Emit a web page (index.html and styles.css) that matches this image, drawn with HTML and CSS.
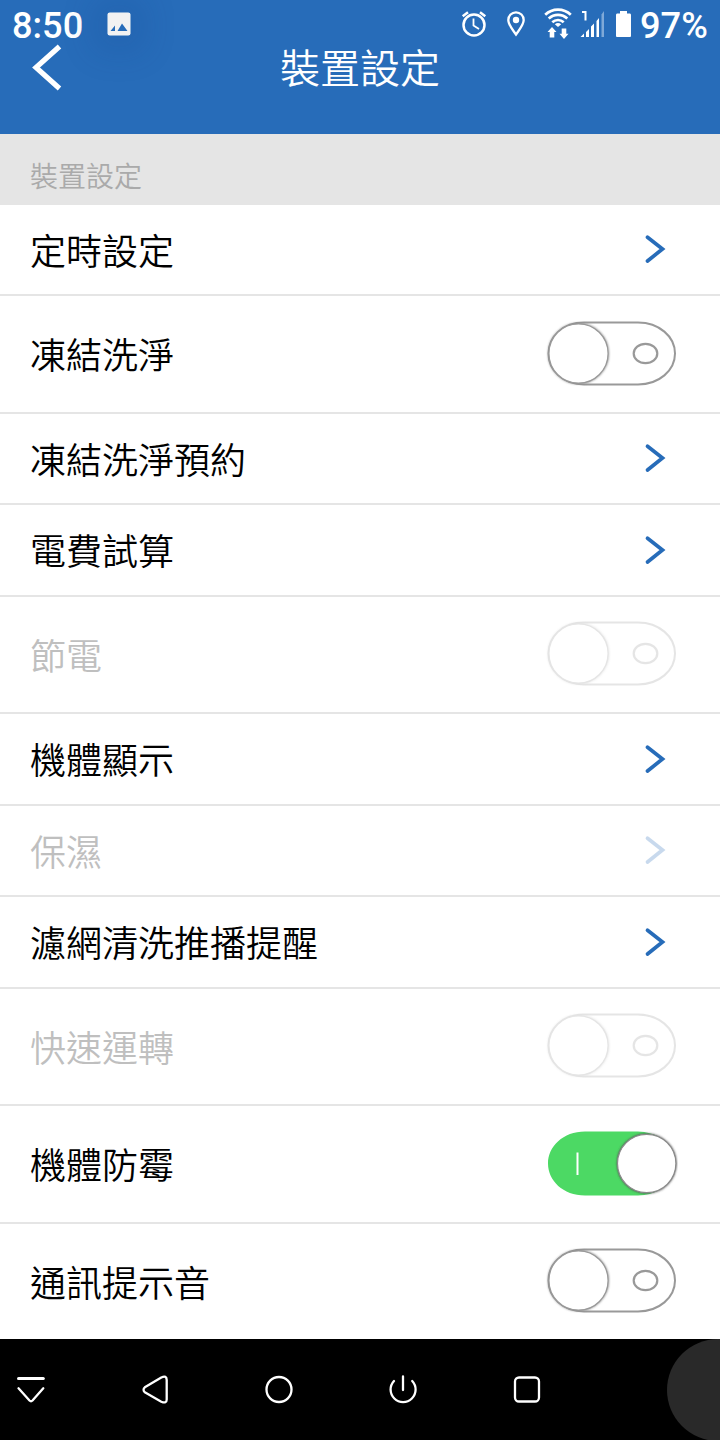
FILE: index.html
```html
<!DOCTYPE html>
<html lang="zh-Hant">
<head>
<meta charset="utf-8">
<title>裝置設定</title>
<link rel="stylesheet" href="styles.css">
</head>
<body>
<svg class="defs" width="0" height="0">
  <defs>
    <filter id="soft" x="-20%" y="-20%" width="140%" height="140%"><feGaussianBlur stdDeviation="1.2"/></filter>
    <symbol id="chevron" viewBox="0 0 22 30"><path d="M3.500 3.200 18.500 15 3.500 27" fill="none" stroke="currentColor" stroke-width="3.700" stroke-linecap="round"/></symbol>
    <symbol id="toggle-off" viewBox="0 0 132 68">
      <path d="M38 2.500H92C113 2.500 129 16.500 129 33.500S113 64.500 92 64.500H38C17 64.500 2.500 50.500 2.500 33.500S17 2.500 38 2.500Z" fill="#fff" stroke="#999" stroke-width="2"/>
      <circle cx="32.500" cy="33.500" r="29.600" fill="none" stroke="#888" stroke-width="1.800" filter="url(#soft)"/>
      <circle cx="32.500" cy="33.500" r="29.600" fill="#fff" stroke="#999" stroke-width="1.300"/>
      <ellipse cx="99.500" cy="33.500" rx="11.800" ry="9.600" fill="none" stroke="#999" stroke-width="2.200"/>
    </symbol>
    <symbol id="toggle-on" viewBox="0 0 132 68">
      <path d="M39 1.500H92Q105 2 113 7L100 33.500 113 60Q105 65 92 65.500H39C17 65.500 2 50.500 2 33.500S17 1.500 39 1.500Z" fill="#4cd964"/>
      <path d="M31.500 22.500V45" stroke="#fff" stroke-width="2"/>
      <circle cx="100.700" cy="33.500" r="29.300" fill="#555" stroke="#555" stroke-width="1.200" filter="url(#soft)"/>
      <circle cx="100.700" cy="33.500" r="29.200" fill="#fff" stroke="#8a8a8a" stroke-width="1.200"/>
    </symbol>
  </defs>
</svg>
<main class="screen">
  <header class="header">
    <div class="status">
      <span class="clock">8:50</span>
      <svg class="photo" width="24" height="24" viewBox="0 0 24 24"><rect x="0.500" y="0.500" width="23" height="23" rx="2" fill="#f2f2f2"/><path d="M3.500 19 8 13.500V19ZM10.500 19 15 11.500 20.500 19Z" fill="#276cb9"/></svg>
      <svg class="indicators" width="200" height="48" viewBox="440 0 200 48" fill="none" stroke="#fff">
        <circle cx="474" cy="25" r="10.500" stroke-width="2.500"/><path d="M473.500 18.500V25.500L479 29" stroke-width="1.800"/><path d="M462.700 16.300 468 12.300M480 12.300 485.300 16.300" stroke-width="2.500"/>
        <path d="M516 34.500C513 30 508.300 25 508.300 20A7.700 7.700 0 0 1 523.700 20C523.700 25 519 30 516 34.500Z" stroke-width="2.300"/><circle cx="516" cy="20" r="3.200" fill="#fff" stroke="none"/>
        <path d="M545.200 14.700A18.500 18.500 0 0 1 570.800 14.700M548.700 18.500A13.500 13.500 0 0 1 567.300 18.500M552.300 22.200A8.500 8.500 0 0 1 563.700 22.200" stroke-width="2.700"/><path d="M554.800 24.200Q558 21.800 561.200 24.200L558 27Z" fill="#fff" stroke="none"/>
        <path d="M552 27 556.500 32H554.300V37.500H549.700V32H547.500ZM561.700 28.500H566.300V33.800H568.500L564 39 559.500 33.800H561.700Z" fill="#fff" stroke="none"/>
        <path d="M582 12H585.500V20.500" stroke-width="2"/>
        <path d="M580.500 37 584 33.500V37ZM586 32 589 29V37H586ZM591 26.500 594 23.500V37H591ZM596.500 21 599 18V37H596.500Z" fill="#fff" stroke="none"/><path d="M601.500 14.500 604 11V37H601.500Z" fill="#7fa9d8" stroke="none"/>
        <path d="M620 11H627V13.500H630Q631 13.500 631 15V36Q631 37 630 37H617Q616 37 616 36V15Q616 13.500 617 13.500H620Z" fill="#fff" stroke="none"/>
      </svg>
      <span class="battery-level">97%</span>
    </div>
    <div class="titlebar">
      <svg class="back" width="32" height="50" viewBox="30 42 32 50"><path d="M59.500 46.500 36 67.500 59.500 88.500" fill="none" stroke="#fff" stroke-width="5.200"/></svg>
      <h1 class="title">裝置設定</h1>
    </div>
  </header>
  <h2 class="section">裝置設定</h2>
  <ul class="list">
    <li class="row"><span>定時設定</span><svg class="chevron"><use href="#chevron"/></svg></li>
    <li class="row tall"><span>凍結洗淨</span><svg class="toggle"><use href="#toggle-off"/></svg></li>
    <li class="row"><span>凍結洗淨預約</span><svg class="chevron"><use href="#chevron"/></svg></li>
    <li class="row"><span>電費試算</span><svg class="chevron"><use href="#chevron"/></svg></li>
    <li class="row tall disabled"><span>節電</span><svg class="toggle"><use href="#toggle-off"/></svg></li>
    <li class="row"><span>機體顯示</span><svg class="chevron"><use href="#chevron"/></svg></li>
    <li class="row disabled"><span>保濕</span><svg class="chevron"><use href="#chevron"/></svg></li>
    <li class="row"><span>濾網清洗推播提醒</span><svg class="chevron"><use href="#chevron"/></svg></li>
    <li class="row tall disabled"><span>快速運轉</span><svg class="toggle"><use href="#toggle-off"/></svg></li>
    <li class="row tall"><span>機體防霉</span><svg class="toggle"><use href="#toggle-on"/></svg></li>
    <li class="row tall"><span>通訊提示音</span><svg class="toggle"><use href="#toggle-off"/></svg></li>
  </ul>
  <nav class="navbar">
    <svg width="720" height="101" viewBox="0 1339 720 101" fill="none" stroke="#fff" stroke-width="2.300" stroke-linecap="round" stroke-linejoin="round">
      <path d="M18.500 1378.500H43.300" stroke-width="3"/><path d="M18.500 1388.300 29.500 1400.500Q31 1402 32.500 1400.500L43.300 1388.300"/>
      <path d="M161.300 1377.500 144.800 1387.300Q142.300 1389.500 144.800 1392.300L161.300 1401.700Q166.700 1404 166.700 1399.500V1380Q166.700 1375 161.300 1377.500Z"/>
      <circle cx="279" cy="1389.500" r="12.500"/>
      <path d="M394 1381A12.500 12.500 0 1 0 412.200 1381M403 1376.500V1390"/>
      <rect x="515" y="1377.500" width="24" height="24" rx="4"/>
      <circle cx="718" cy="1390" r="51" fill="#292929" stroke="none"/>
    </svg>
  </nav>
</main>
</body>
</html>
```
FILE: styles.css
```css
* { box-sizing: border-box; }
body { margin: 0; font-family: "Noto Sans CJK TC", sans-serif; background: #fff; }
.defs { position: absolute; }
.screen { width: 720px; height: 1440px; display: flex; flex-direction: column; overflow: hidden; }
.header { height: 134px; background: #276cb9; color: #fff; flex: none; }
.status { height: 42px; display: flex; align-items: flex-start; padding-left: 12px; font: 500 36.2px/52px Roboto, sans-serif; }
.clock { width: 95px; }
.photo { margin-top: 12px; border-radius: 3px; box-shadow: 0 2px 30px 16px rgba(20, 70, 140, .15); }
.indicators { margin-left: 309px; flex: none; }
.titlebar { height: 50px; display: grid; grid-template-columns: 32px 1fr 32px; padding: 0 30px; }
.title { margin: 0; font-size: 40px; line-height: 48px; font-weight: 350; text-align: center; }
.section { flex: none; margin: 0; height: 70.5px; padding-left: 30px; background: #e5e5e5; color: #aaa; font-size: 28px; line-height: 82px; font-weight: 350; }
.list { margin: 0; padding: 0; list-style: none; flex: none; height: 1134.5px; }
.row { height: 91.5px; display: flex; align-items: center; justify-content: space-between; padding: 0 42px 0 30px; border-bottom: 2px solid #e5e5e5; font-size: 36px; line-height: 52px; font-weight: 350; color: #000; }
.row span { padding-bottom: 1px; }
.tall { height: 117.5px; }
.row:last-child { height: 115.5px; border: 0; }
.chevron { width: 22px; height: 30px; margin-right: 12px; color: #276cb9; }
.toggle { width: 132px; height: 68px; }
.disabled span { color: #bfbfbf; }
.disabled svg { opacity: .25; }
.navbar { height: 101px; background: #000; flex: none; }
.navbar svg { display: block; }
```
